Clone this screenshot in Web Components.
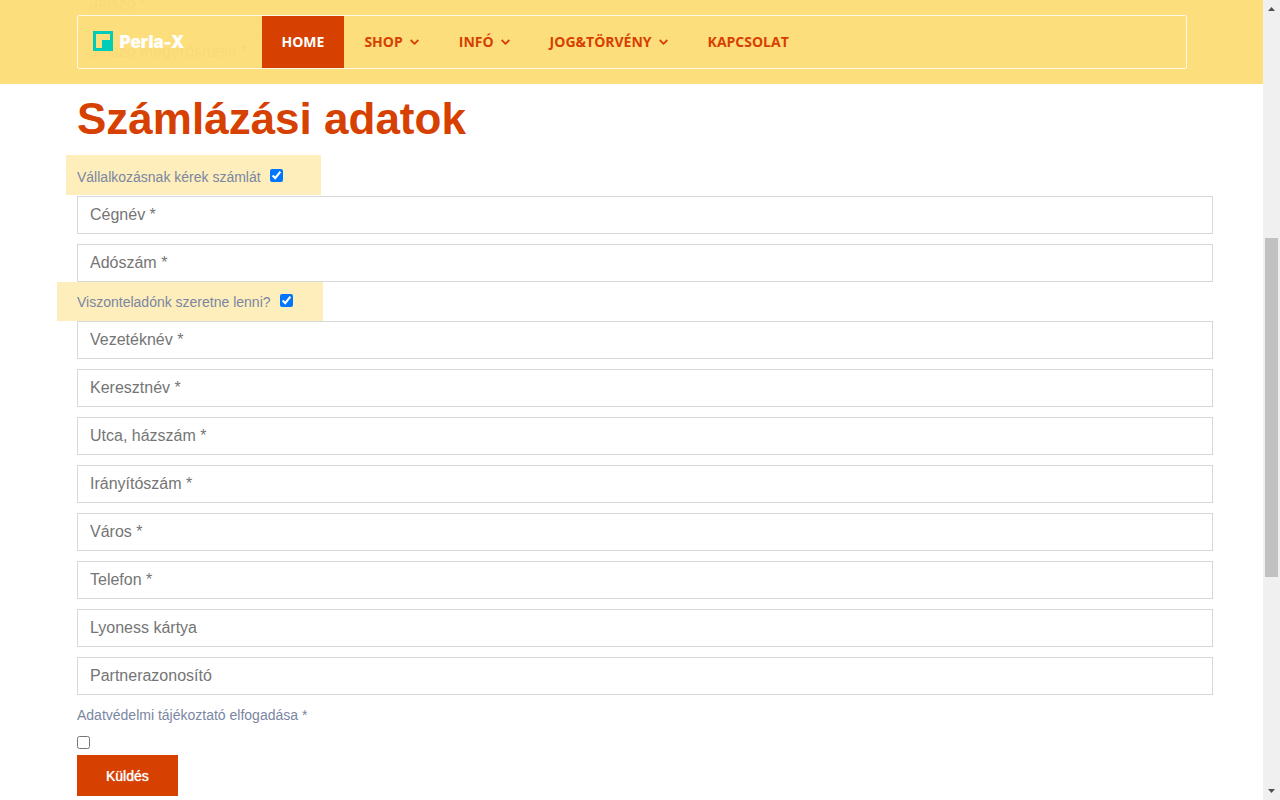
<!DOCTYPE html>
<html lang="hu">
<head>
<meta charset="utf-8">
<meta name="viewport" content="width=device-width, initial-scale=1">
<title>Perla-X</title>
<style>
	html, body {
		margin: 0;
		height: 100%;
	}

	body {
		font-family: "Liberation Sans", Arial, sans-serif;
		font-size: 14px;
		color: #7a86a3;
		background: #fff;
		--brand: #d64000;
	}

	px-field + px-field {
		margin-top: 10px;
	}
</style>
</head>
<body>

<px-app>
	<px-navbar slot="header">
		<px-logo slot="logo">Perla-X</px-logo>
		<px-nav-item active>HOME</px-nav-item>
		<px-nav-item dropdown>SHOP</px-nav-item>
		<px-nav-item dropdown>INFÓ</px-nav-item>
		<px-nav-item dropdown>JOG&amp;TÖRVÉNY</px-nav-item>
		<px-nav-item>KAPCSOLAT</px-nav-item>
	</px-navbar>

	<px-section>
		<px-field type="password" label="Jelszó *"></px-field>
		<px-field type="password" label="Jelszó megerősítése *"></px-field>
	</px-section>
	<px-section heading="Számlázási adatok">
		<px-check highlight="company" checked>Vállalkozásnak kérek számlát</px-check>
		<px-field label="Cégnév *"></px-field>
		<px-field label="Adószám *"></px-field>
	</px-section>
	<px-section>
		<px-check highlight="reseller" checked>Viszonteladónk szeretne lenni?</px-check>
		<px-field label="Vezetéknév *"></px-field>
		<px-field label="Keresztnév *"></px-field>
		<px-field label="Utca, házszám *"></px-field>
		<px-field label="Irányítószám *"></px-field>
		<px-field label="Város *"></px-field>
		<px-field type="tel" label="Telefon *"></px-field>
		<px-field label="Lyoness kártya"></px-field>
		<px-field label="Partnerazonosító"></px-field>
	</px-section>
	<px-check stacked>Adatvédelmi tájékoztató elfogadása *</px-check>
	<px-button>Küldés</px-button>

	<px-scrollbar slot="scrollbar"></px-scrollbar>
</px-app>

<script>
/* px-app — page frame: header over the content, scrollbar on the right */
class PxApp extends HTMLElement {
	constructor() {
		super();
		this.attachShadow({ mode: 'open' });
	}

	connectedCallback() {
		this.shadowRoot.innerHTML = `
      <style>
        :host {
          display: flex;
          height: 100vh;
          overflow: hidden;
        }

        .page {
          position: relative;
          flex: 1;
          min-width: 0;
          overflow: hidden;
        }

        header {
          position: absolute;
          top: 0;
          left: 0;
          right: 0;
          z-index: 1;
        }

        /* the form is scrolled partly under the header */
        main {
          margin-top: -15px;
          padding: 0 50px 0 77px;
        }
      </style>

      <div class="page">
        <header><slot name="header"></slot></header>
        <main><slot></slot></main>
      </div>
      <slot name="scrollbar"></slot>
    `;
	}
}

/* px-navbar — slots: logo, default (px-nav-item) */
class PxNavbar extends HTMLElement {
	constructor() {
		super();
		this.attachShadow({ mode: 'open' });
	}

	connectedCallback() {
		this.shadowRoot.innerHTML = `
      <style>
        :host {
          display: block;
          padding: 15px 20px;
          background: rgba(253, 221, 120, 0.96);
        }

        .bar {
          display: flex;
          box-sizing: border-box;
          max-width: 1110px;
          height: 54px;
          margin: 0 auto;
          border: 1px solid rgba(255, 255, 255, 0.8);
          border-radius: 2px;
        }

        .logo {
          display: flex;
          align-items: center;
          box-sizing: border-box;
          width: 184px;
          padding: 0 0 2px 15px;
        }

        nav {
          display: flex;
        }
      </style>

      <div class="bar">
        <div class="logo"><slot name="logo"></slot></div>
        <nav><slot></slot></nav>
      </div>
    `;
	}
}

class PxLogo extends HTMLElement {
	constructor() {
		super();
		this.attachShadow({ mode: 'open' });
	}

	connectedCallback() {
		this.shadowRoot.innerHTML = `
      <style>
        :host {
          display: block;
        }

        a {
          display: flex;
          align-items: flex-start;
          gap: 7px;
          color: #fff;
          font: 900 17px/28px Inter, sans-serif;
          text-decoration: none;
        }

        svg {
          display: block;
          margin: 4px 0;
        }

        span {
          padding-top: 1px;
        }
      </style>

      <a href="#">
        <svg width="20" height="20" viewBox="0 0 20 20" aria-hidden="true">
          <path fill="#00cdb9" fill-rule="evenodd" d="M0 0h20v20H0zM3 3v14h6V9h8V3z"/>
        </svg>
        <span><slot></slot></span>
      </a>
    `;
	}
}

/* px-nav-item — attributes: active, dropdown */
class PxNavItem extends HTMLElement {
	constructor() {
		super();
		this.attachShadow({ mode: 'open' });
	}

	connectedCallback() {
		const arrow = this.hasAttribute('dropdown')
			? `<svg width="9" height="6" viewBox="0 0 9 6" aria-hidden="true">
           <path d="M.7 1l3.800 3.800L8.300 1" fill="none" stroke="currentColor" stroke-width="1.800"/>
         </svg>`
			: '';

		this.shadowRoot.innerHTML = `
      <style>
        :host {
          display: flex;
        }

        a {
          display: flex;
          align-items: center;
          gap: 7px;
          padding: 0 20px;
          color: var(--brand);
          font: 700 14px/20px "Open Sans", sans-serif;
          text-decoration: none;
        }

        :host([active]) a {
          color: #fff;
          background: var(--brand);
        }
      </style>

      <a href="#"><span><slot></slot></span>${arrow}</a>
    `;
	}
}

/* px-section — column of form rows with an optional heading */
class PxSection extends HTMLElement {
	constructor() {
		super();
		this.attachShadow({ mode: 'open' });
	}

	connectedCallback() {
		const heading = this.getAttribute('heading');

		this.shadowRoot.innerHTML = `
      <style>
        :host {
          display: block;
        }

        h2 {
          margin: 0;
          padding: 23px 0 11px;
          color: var(--brand);
          font-size: 44px;
          line-height: 50px;
        }

        .rows {
          display: flex;
          flex-direction: column;
        }
      </style>

      ${heading ? `<h2>${heading}</h2>` : ''}
      <div class="rows"><slot></slot></div>
    `;
	}
}

/* px-field — attributes: label, type */
class PxField extends HTMLElement {
	constructor() {
		super();
		this.attachShadow({ mode: 'open' });
	}

	connectedCallback() {
		const label = this.getAttribute('label');
		const type = this.getAttribute('type') || 'text';

		this.shadowRoot.innerHTML = `
      <style>
        :host {
          display: block;
        }

        input {
          display: block;
          box-sizing: border-box;
          width: 100%;
          height: 38px;
          margin: 0;
          padding: 0 12px;
          border: 1px solid #d6d8da;
          border-radius: 0;
          background: #fff;
          color: #495057;
          font: inherit;
          font-size: 16px;
        }

        input::placeholder {
          color: #757575;
        }
      </style>

      <input type="${type}" placeholder="${label}" aria-label="${label}">
    `;
	}
}

/* px-check — attributes: checked, stacked, highlight="company|reseller" */
class PxCheck extends HTMLElement {
	constructor() {
		super();
		this.attachShadow({ mode: 'open' });
	}

	connectedCallback() {
		this.shadowRoot.innerHTML = `
      <style>
        :host {
          display: flex;
          align-items: center;
          gap: 10px;
          line-height: 20px;
        }

        :host([highlight]) {
          align-self: flex-start;
          box-sizing: border-box;
          gap: 9px;
          background: #feeebb;
        }

        :host([highlight="company"]) {
          height: 40px;
          margin: 0 0 1px -11px;
          padding: 4px 38px 0 11px;
        }

        :host([highlight="reseller"]) {
          height: 39px;
          margin-left: -20px;
          padding: 0 30px 0 20px;
        }

        :host([stacked]) {
          flex-direction: column;
          align-items: flex-start;
          gap: 11px;
          padding-top: 10px;
        }

        input {
          width: 13px;
          height: 13px;
          margin: 0;
        }

        :host([highlight]) input {
          margin-bottom: 3px;
        }
      </style>

      <label for="box"><slot></slot></label>
      <input type="checkbox" id="box" ${this.hasAttribute('checked') ? 'checked' : ''}>
    `;
	}
}

class PxButton extends HTMLElement {
	constructor() {
		super();
		this.attachShadow({ mode: 'open' });
	}

	connectedCallback() {
		this.shadowRoot.innerHTML = `
      <style>
        :host {
          display: block;
          padding-top: 6px;
        }

        button {
          display: block;
          height: 41px;
          padding: 0 29px;
          border: 0;
          background: var(--brand);
          color: #fff;
          font: inherit;
          text-shadow: 0 0 1px #fff;
          cursor: pointer;
        }
      </style>

      <button type="submit"><slot></slot></button>
    `;
	}
}

/* px-scrollbar — classic vertical scrollbar with arrows */
class PxScrollbar extends HTMLElement {
	constructor() {
		super();
		this.attachShadow({ mode: 'open' });
	}

	connectedCallback() {
		this.shadowRoot.innerHTML = `
      <style>
        :host {
          display: flex;
          flex-direction: column;
          width: 17px;
          background: #f0f0f0;
        }

        svg {
          display: block;
          flex: none;
        }

        .before { flex: 221; }
        .after { flex: 206; }

        .thumb {
          flex: 339;
          margin: 0 2px;
          background: #c1c1c1;
        }
      </style>

      <svg width="17" height="17" viewBox="0 0 17 17" aria-hidden="true"><path fill="#505050" d="M5 11h7L8.500 7z"/></svg>
      <div class="before"></div>
      <div class="thumb"></div>
      <div class="after"></div>
      <svg width="17" height="17" viewBox="0 0 17 17" aria-hidden="true"><path fill="#505050" d="M5 6h7L8.500 10z"/></svg>
    `;
	}
}

customElements.define('px-app', PxApp);
customElements.define('px-navbar', PxNavbar);
customElements.define('px-logo', PxLogo);
customElements.define('px-nav-item', PxNavItem);
customElements.define('px-section', PxSection);
customElements.define('px-field', PxField);
customElements.define('px-check', PxCheck);
customElements.define('px-button', PxButton);
customElements.define('px-scrollbar', PxScrollbar);
</script>
</body>
</html>
